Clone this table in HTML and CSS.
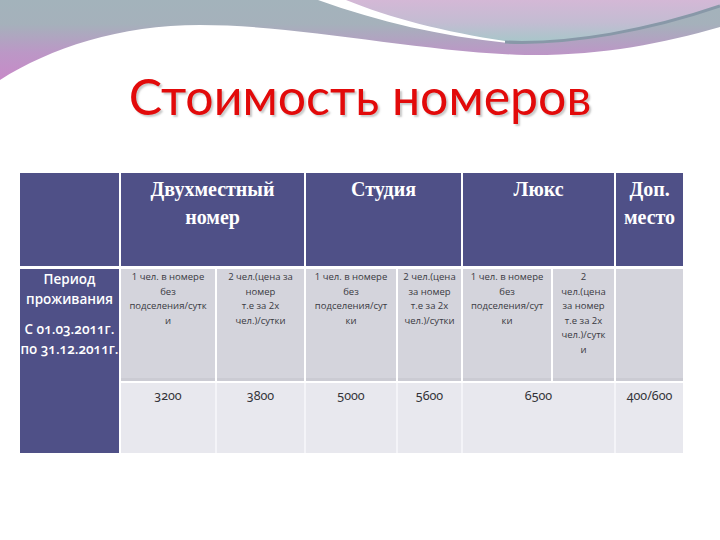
FILE: index.html
```html
<!DOCTYPE html>
<html lang="ru">
<head>
<meta charset="utf-8">
<title>Стоимость номеров</title>
<link rel="stylesheet" href="styles.css">
</head>
<body>
<div class="slide">
  <svg class="deco" width="720" height="90" viewBox="0 0 720 90" aria-hidden="true">
    <defs>
      <linearGradient id="gBase" x1="0" y1="0" x2="0" y2="80" gradientUnits="userSpaceOnUse">
        <stop offset="0" stop-color="#a3b3bb"/>
        <stop offset="0.3" stop-color="#a5b1bb"/>
        <stop offset="0.65" stop-color="#bb98c6"/>
        <stop offset="1" stop-color="#c88ac8"/>
      </linearGradient>
      <linearGradient id="gTop" x1="0" y1="0" x2="0" y2="45" gradientUnits="userSpaceOnUse">
        <stop offset="0" stop-color="#d4b8d6"/>
        <stop offset="0.5" stop-color="#c3bcd2"/>
        <stop offset="1" stop-color="#a3c8c8"/>
      </linearGradient>
    </defs>
    <path d="M0,0 H720 V27 C660,44 600,56 525,55 C420,52 300,25 200,25 C120,25 50,48 0,80 Z" fill="url(#gBase)"/>
    <path d="M322,0 C380,20 440,35 505,42 C570,46 650,30 720,6 V0 Z" fill="url(#gTop)"/>
    <path d="M318,0 C380,22 440,36 508,43 L505,41 C445,32 390,18 346,0 Z" fill="#ffffff"/>
    <path d="M505,42 C570,45 650,30 720,6" fill="none" stroke="#8898a8" stroke-width="3"/>
  </svg>

  <h1 class="title">Стоимость номеров</h1>

  <table class="prices">
    <colgroup>
      <col class="c1"><col class="c2a"><col class="c2b"><col class="c3a"><col class="c3b"><col class="c4a"><col class="c4b"><col class="c5">
    </colgroup>
    <tr class="head">
      <td class="dark"></td>
      <td colspan="2">Двухместный<br>номер</td>
      <td colspan="2">Студия</td>
      <td colspan="2">Люкс</td>
      <td>Доп.<br>место</td>
    </tr>
    <tr class="desc">
      <td class="dark period" rowspan="2">
        <p>Период<br>проживания</p>
        <p>С 01.03.2011г.<br>по 31.12.2011г.</p>
      </td>
      <td>1 чел. в номере<br>без<br>подселения/сутк<br>и</td>
      <td>2 чел.(цена за<br>номер<br>т.е за 2х<br>чел.)/сутки</td>
      <td>1 чел. в номере<br>без<br>подселения/сут<br>ки</td>
      <td>2 чел.(цена<br>за номер<br>т.е за 2х<br>чел.)/сутки</td>
      <td>1 чел. в номере<br>без<br>подселения/сут<br>ки</td>
      <td>2<br>чел.(цена<br>за номер<br>т.е за 2х<br>чел.)/сутк<br>и</td>
      <td></td>
    </tr>
    <tr class="nums">
      <td>3200</td>
      <td>3800</td>
      <td>5000</td>
      <td>5600</td>
      <td colspan="2">6500</td>
      <td>400/600</td>
    </tr>
  </table>
</div>
</body>
</html>
```

FILE: styles.css
```css
html, body {
  margin: 0;
  padding: 0;
  background: #ffffff;
}

.slide {
  position: relative;
  width: 720px;
  height: 540px;
  overflow: hidden;
  background: #ffffff;
}

.deco {
  position: absolute;
  left: 0;
  top: 0;
  display: block;
}

.title {
  position: relative;
  margin: 0;
  padding-top: 71px;
  height: 113px;
  box-sizing: border-box;
  text-align: center;
  font-family: "Lato", "Liberation Sans", sans-serif;
  font-weight: 400;
  font-size: 50px;
  line-height: 50px;
  color: #e20a0a;
  text-shadow: 2px 2px 2px rgba(120, 120, 120, 0.4);
}

.prices {
  margin-left: 20px;
  margin-top: 60px;
  border-collapse: separate;
  border-spacing: 0;
  table-layout: fixed;
  width: 663px;
}

.c1 { width: 101px; }
.c2a { width: 96px; }
.c2b { width: 89px; }
.c3a { width: 92px; }
.c3b { width: 65px; }
.c4a { width: 90px; }
.c4b { width: 63px; }
.c5 { width: 67px; }

.prices td {
  padding: 0;
  vertical-align: top;
  text-align: center;
  border-right: 2px solid #ffffff;
  box-sizing: border-box;
}

.prices td:last-child {
  border-right: none;
}

.head td {
  height: 96px;
  background: #4f5087;
  color: #ffffff;
  font-family: "Liberation Serif", "DejaVu Serif", serif;
  font-weight: 700;
  font-size: 20px;
  line-height: 28px;
  padding-top: 2px;
  border-bottom: 3px solid #ffffff;
}

.dark {
  background: #4f5087;
}

.period {
  color: #ffffff;
  font-family: "Open Sans", "Noto Sans", sans-serif;
  font-size: 13.5px;
  line-height: 20px;
  font-weight: 600;
  font-variant-numeric: oldstyle-nums;
}

.period p {
  margin: 0 0 10px 0;
}

.desc td:not(.dark) {
  height: 114px;
  background: #d4d4dc;
  color: #3a3a42;
  font-family: "Open Sans", "Noto Sans", sans-serif;
  font-size: 9.5px;
  line-height: 14.5px;
  padding-top: 1px;
  border-bottom: 2px solid #ffffff;
  box-shadow: inset 0 -3px 0 #cbcbd3;
}

.nums td {
  height: 70px;
  background: #e8e8ee;
  color: #333338;
  font-family: "Noto Sans", "Open Sans", sans-serif;
  font-size: 12.5px;
  line-height: 16px;
  padding-top: 5px;
  font-variant-numeric: oldstyle-nums;
  border-right-color: #f4f4f8;
}

.nums td:last-child {
  border-right: none;
}
```
